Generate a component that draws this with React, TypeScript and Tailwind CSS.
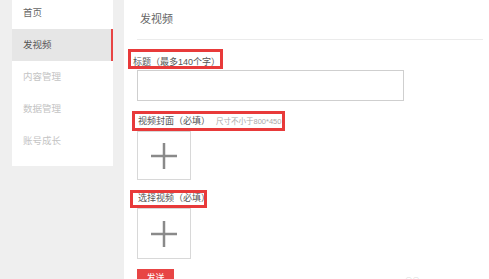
import { ReactNode } from 'react'

const NAV = [
  { label: '首页', active: false, dim: false },
  { label: '发视频', active: true, dim: false },
  { label: '内容管理', active: false, dim: true },
  { label: '数据管理', active: false, dim: true },
  { label: '账号成长', active: false, dim: true },
]

const FONT = "font-['Liberation_Sans','Noto_Sans_CJK_SC',sans-serif]"

function Marked({ children, box }: { children: ReactNode; box: string }) {
  // red annotation frame drawn over the label
  return (
    <span className="relative inline-block whitespace-nowrap">
      {children}
      <span className={`absolute border-[3px] border-[#e83a3a] ${box}`} />
    </span>
  )
}

function UploadBox({ h }: { h: string }) {
  return (
    <div className={`w-[54px] ${h} border border-[#d8d8d8] flex items-center justify-center`}>
      <svg width="28" height="28" viewBox="0 0 28 28">
        <path d="M14 1v26M1 14h26" stroke="#8a8a8a" strokeWidth="2.5" />
      </svg>
    </div>
  )
}

export default function App() {
  return (
    <div className={`w-[489px] h-[279px] bg-[#efefef] flex overflow-hidden ${FONT}`}>
      <div className="ml-[12px] w-[101px] h-[166px] bg-white flex-shrink-0 overflow-hidden">
        <div className="-mt-[3px]">
          {NAV.map((n) => (
            <div
              key={n.label}
              className={`h-[32px] flex items-center pl-[11px] text-[9.5px] relative ${
                n.active ? 'bg-[#e6e6e6] text-[#555]' : n.dim ? 'text-[#c4c4c4]' : 'text-[#666]'
              }`}
            >
              {n.label}
              {n.active && <span className="absolute right-0 top-0 bottom-0 w-[2px] bg-[#e84545]" />}
            </div>
          ))}
        </div>
      </div>

      <div className="ml-[11px] flex-1 bg-white pl-[13px] pr-[6px]">
        <div className="h-[40px] border-b border-[#ebebeb] flex items-center pl-[3px] text-[11px] text-[#666]">
          发视频
        </div>

        <div className="mt-[16px] h-[14px] leading-[14px] text-[9px] text-[#555] -ml-[4px]">
          <Marked box="-left-[5px] -top-[7px] w-[95px] h-[20px]">
            <span className="relative -top-[1px]">标题（最多140个字）</span>
          </Marked>
        </div>
        <div className="w-[267px] h-[31px] border border-[#cfcfcf]" />

        <div className="mt-[13px] h-[14px] leading-[14px] text-[9px] text-[#555] ml-[1px]">
          <Marked box="-left-[6px] -top-[3px] w-[153px] h-[20px]">
            <span>视频封面（必填）</span>
            <span className="ml-[6px] text-[7.5px] text-[#aaa]">尺寸不小于800*450</span>
          </Marked>
        </div>
        <div className="mt-[3px]">
          <UploadBox h="h-[49px]" />
        </div>

        <div className="mt-[12px] h-[14px] leading-[14px] text-[9px] text-[#555] ml-[1px]">
          <Marked box="-left-[8px] -top-[2px] w-[77px] h-[18px]">
            <span className="relative -top-[1px]">选择视频（必填）</span>
          </Marked>
        </div>
        <div className="mt-[2px]">
          <UploadBox h="h-[51px]" />
        </div>

        <div className="mt-[10px] flex items-start">
          <div className="w-[37px] h-[22px] bg-[#e84545] text-white text-[9px] flex items-start justify-center pt-[3px]">
            发送
          </div>
          <span className="ml-[231px] mt-[4px] text-[12px] leading-[12px] text-[#ddd]">○○</span>
        </div>
      </div>
    </div>
  )
}
